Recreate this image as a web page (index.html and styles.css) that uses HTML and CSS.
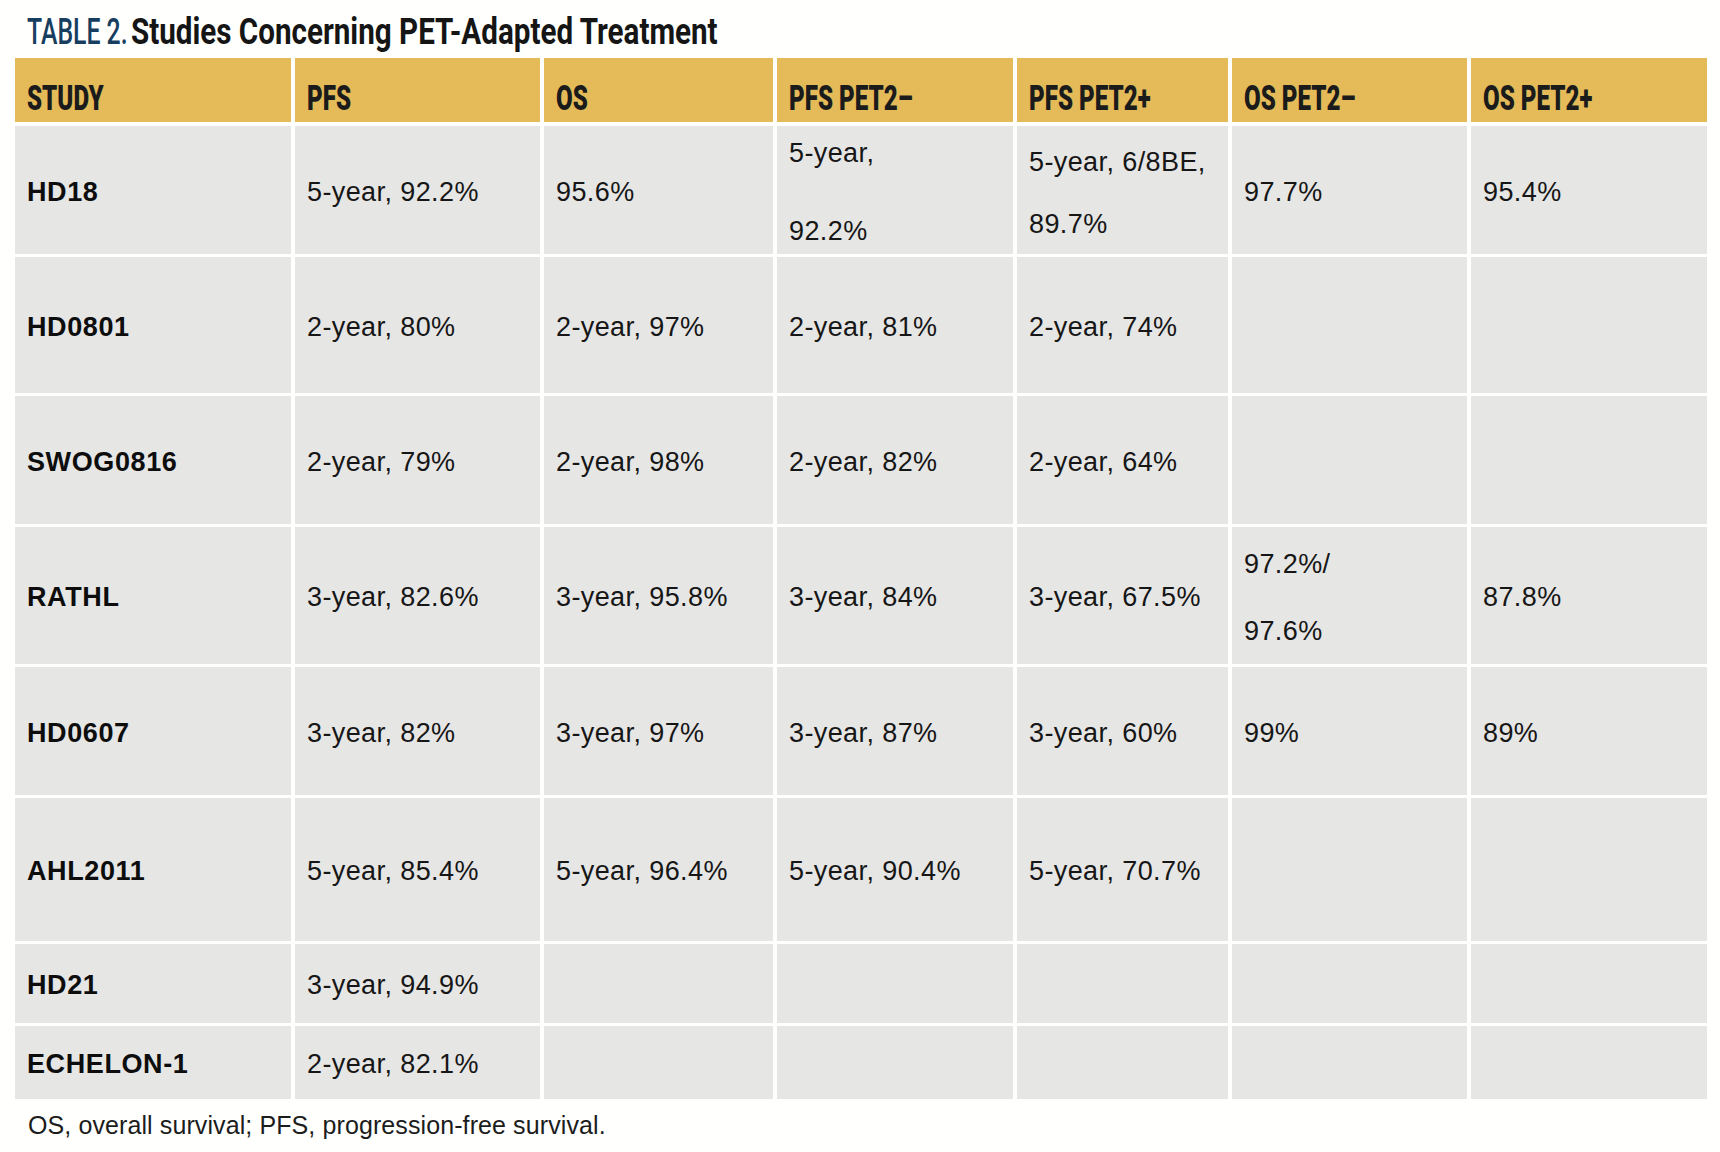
FILE: index.html
```html
<!DOCTYPE html>
<html lang="en">
<head>
<meta charset="utf-8">
<title>Table 2. Studies Concerning PET-Adapted Treatment</title>
<link rel="stylesheet" href="styles.css">
</head>
<body>
<div class="page">
  <h1 class="title">
    <span class="t-num-box"><span class="t-num">TABLE 2.</span></span>
    <span class="t-main-box"><span class="t-main">Studies Concerning PET-Adapted Treatment</span></span>
  </h1>

  <div class="table">
    <div class="th"><span class="th-text">STUDY</span></div>
    <div class="th"><span class="th-text">PFS</span></div>
    <div class="th"><span class="th-text">OS</span></div>
    <div class="th"><span class="th-text">PFS PET2–</span></div>
    <div class="th"><span class="th-text">PFS PET2+</span></div>
    <div class="th"><span class="th-text">OS PET2–</span></div>
    <div class="th"><span class="th-text">OS PET2+</span></div>

    <div class="td study">HD18</div>
    <div class="td">5-year, 92.2%</div>
    <div class="td">95.6%</div>
    <div class="td"><span class="split split-wide">5-year,<br>92.2%</span></div>
    <div class="td"><span class="split split-narrow">5-year, 6/8BE,<br>89.7%</span></div>
    <div class="td">97.7%</div>
    <div class="td">95.4%</div>

    <div class="td study">HD0801</div>
    <div class="td">2-year, 80%</div>
    <div class="td">2-year, 97%</div>
    <div class="td">2-year, 81%</div>
    <div class="td">2-year, 74%</div>
    <div class="td"></div>
    <div class="td"></div>

    <div class="td study">SWOG0816</div>
    <div class="td">2-year, 79%</div>
    <div class="td">2-year, 98%</div>
    <div class="td">2-year, 82%</div>
    <div class="td">2-year, 64%</div>
    <div class="td"></div>
    <div class="td"></div>

    <div class="td study">RATHL</div>
    <div class="td">3-year, 82.6%</div>
    <div class="td">3-year, 95.8%</div>
    <div class="td">3-year, 84%</div>
    <div class="td">3-year, 67.5%</div>
    <div class="td"><span class="split split-mid">97.2%/<br>97.6%</span></div>
    <div class="td">87.8%</div>

    <div class="td study">HD0607</div>
    <div class="td">3-year, 82%</div>
    <div class="td">3-year, 97%</div>
    <div class="td">3-year, 87%</div>
    <div class="td">3-year, 60%</div>
    <div class="td">99%</div>
    <div class="td">89%</div>

    <div class="td study">AHL2011</div>
    <div class="td">5-year, 85.4%</div>
    <div class="td">5-year, 96.4%</div>
    <div class="td">5-year, 90.4%</div>
    <div class="td">5-year, 70.7%</div>
    <div class="td"></div>
    <div class="td"></div>

    <div class="td study">HD21</div>
    <div class="td">3-year, 94.9%</div>
    <div class="td"></div>
    <div class="td"></div>
    <div class="td"></div>
    <div class="td"></div>
    <div class="td"></div>

    <div class="td study">ECHELON-1</div>
    <div class="td">2-year, 82.1%</div>
    <div class="td"></div>
    <div class="td"></div>
    <div class="td"></div>
    <div class="td"></div>
    <div class="td"></div>
  </div>

  <p class="note">OS, overall survival; PFS, progression-free survival.</p>
</div>
</body>
</html>
```

FILE: styles.css
```css
html, body {
  margin: 0;
  padding: 0;
  background: #ffffff;
}

.page {
  width: 1720px;
  height: 1152px;
  overflow: hidden;
  background: #fffffe;
}

/* ---------- Title ---------- */
.title {
  margin: 0;
  height: 58px;
  box-sizing: border-box;
  padding: 14px 0 0 27px;
  display: flex;
  align-items: flex-start;
  gap: 6px;
  font-family: Roboto, "Liberation Sans", sans-serif;
  font-size: 37px;
  line-height: 36px;
  white-space: nowrap;
}

.t-num-box {
  display: block;
  width: 98px;
}

.t-num {
  display: inline-block;
  font-weight: 500;
  color: #173e5f;
  transform: scaleX(0.67);
  transform-origin: left center;
}

.t-main-box {
  display: block;
  width: 584px;
}

.t-main {
  display: inline-block;
  font-weight: 700;
  color: #151515;
  transform: scaleX(0.8);
  transform-origin: left center;
}

/* ---------- Table ---------- */
.table {
  margin-left: 15px;
  width: 1692px;
  display: grid;
  grid-template-columns: 276px 245px 229px 236px 211px 235px 236px;
  grid-template-rows: 65px 128px 136px 128px 137px 128px 143px 79px 73px;
  column-gap: 4px;
  row-gap: 3px;
}

.th {
  background: #e4bb58;
  padding: 23px 0 0 12px;
  font-family: Roboto, "Liberation Sans", sans-serif;
  font-weight: 900;
  font-size: 35px;
  line-height: 35px;
  color: #1b1b1b;
  white-space: nowrap;
  height: 64px;
  box-sizing: border-box;
}

.th-text {
  display: inline-block;
  transform: scaleX(0.69);
  transform-origin: left center;
}

.td {
  background: #e6e6e5;
  display: flex;
  align-items: center;
  padding: 4px 0 0 12px;
  font-family: "Liberation Sans", Arial, sans-serif;
  font-size: 27px;
  line-height: 31px;
  letter-spacing: 0.4px;
  color: #161616;
  white-space: nowrap;
}

.td.study {
  font-weight: 700;
  letter-spacing: 0.6px;
  color: #0d0d0d;
}

.split {
  display: block;
}

.split-wide {
  line-height: 78px;
}

.split-narrow {
  line-height: 62px;
  margin-top: 2px;
}

.split-mid {
  line-height: 67px;
}

/* ---------- Footnote ---------- */
.note {
  margin: 11px 0 0 28px;
  font-family: "Liberation Sans", Arial, sans-serif;
  font-size: 25px;
  line-height: 30px;
  letter-spacing: 0.1px;
  color: #1c1c1c;
}
```
